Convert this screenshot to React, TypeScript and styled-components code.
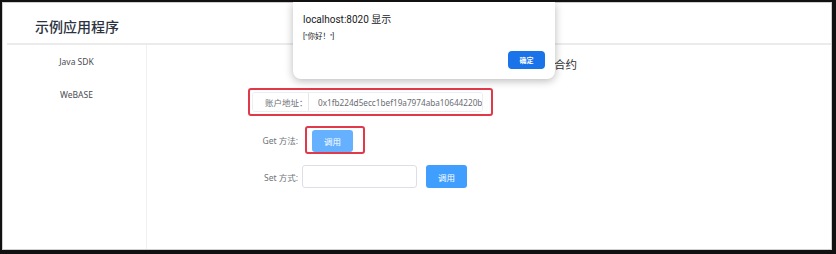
import { createGlobalStyle, styled } from 'styled-components';

const GlobalStyle = createGlobalStyle`
  html, body {
    margin: 0;
    padding: 0;
    background: #ffffff;
  }
  body {
    font-family: 'Noto Sans', 'Noto Sans CJK SC', sans-serif;
    color: #303133;
  }
  * {
    box-sizing: border-box;
  }
`;

const App = () => {
  const address = '0x1fb224d5ecc1bef19a7974aba10644220b';

  return (
    <>
      <GlobalStyle />
      <Frame>
        <Inner>
          <Header>
            <h1>示例应用程序</h1>
          </Header>
          <Body>
            <Sidebar>
              <MenuItem>Java SDK</MenuItem>
              <MenuItem>WeBASE</MenuItem>
            </Sidebar>
            <Main>
              <Title>合约</Title>
              <FormRow $top={15}>
                <Highlight $pad="2px 8px 2px 2px">
                  <InputGroup>
                    <Prepend>账户地址：</Prepend>
                    <GroupInput value={address} readOnly />
                  </InputGroup>
                </Highlight>
              </FormRow>
              <FormRow $top={10}>
                <Label>Get 方法:</Label>
                <Highlight $pad="2px 10px 0 5px" $shift={3}>
                  <Button $light>调用</Button>
                </Highlight>
              </FormRow>
              <FormRow $top={11}>
                <Label>Set 方式:</Label>
                <TextInput />
                <Button>调用</Button>
              </FormRow>
            </Main>
          </Body>
        </Inner>
        <Alert>
          <AlertTitle>localhost:8020 显示</AlertTitle>
          <AlertMessage>["你好！"]</AlertMessage>
          <AlertFooter>
            <AlertButton>确定</AlertButton>
          </AlertFooter>
        </Alert>
      </Frame>
    </>
  );
};

export default App;

const Frame = styled.div`
  position: relative;
  width: 836px;
  height: 254px;
  border-style: solid;
  border-color: #111111;
  border-width: 2px 4px 4px 2px;
  overflow: hidden;
`;

const Inner = styled.div`
  height: 100%;
  border: 1px solid #cfcfcf;
  padding-left: 4px;
  display: flex;
  flex-direction: column;
`;

const Header = styled.div`
  height: 42px;
  display: flex;
  align-items: center;
  padding: 5px 0 0 28px;
  border-bottom: 2px solid #ebebeb;
  h1 {
    margin: 0;
    font-size: 14px;
    font-weight: 500;
    color: #2c3340;
  }
`;

const Body = styled.div`
  flex: 1;
  display: flex;
`;

const Sidebar = styled.div`
  width: 140px;
  border-right: 1px solid #f0f0f0;
  display: flex;
  flex-direction: column;
`;

const MenuItem = styled.div`
  height: 33px;
  line-height: 33px;
  text-align: center;
  font-size: 8.5px;
  color: #4a4d52;
`;

const Main = styled.div`
  flex: 1;
  display: flex;
  flex-direction: column;
  padding-left: 101px;
`;

const Title = styled.div`
  width: 329px;
  margin-top: 12px;
  text-align: right;
  font-size: 11.5px;
  line-height: 16px;
  color: #303133;
`;

const FormRow = styled.div<{ $top: number }>`
  display: flex;
  align-items: center;
  margin-top: ${(p) => p.$top}px;
`;

const Highlight = styled.div<{ $pad: string; $shift?: number }>`
  display: flex;
  align-items: center;
  border: 2px solid #e03a4a;
  border-radius: 3px;
  padding: ${(p) => p.$pad};
  margin-left: ${(p) => p.$shift || 0}px;
`;

const InputGroup = styled.div`
  display: flex;
  height: 20px;
  width: 231px;
  border: 1px solid #eceef2;
  border-radius: 3px;
  overflow: hidden;
`;

const Prepend = styled.div`
  width: 56px;
  padding-left: 12px;
  display: flex;
  align-items: center;
  font-size: 8.5px;
  color: #707379;
  border-right: 1px solid #e4e7ed;
  background: #ffffff;
  white-space: nowrap;
`;

const GroupInput = styled.input`
  flex: 1;
  min-width: 0;
  border: none;
  outline: none;
  padding: 0 0 0 9px;
  font-family: 'Noto Sans', sans-serif;
  font-size: 8.2px;
  color: #6a6d73;
  background: #ffffff;
`;

const Label = styled.div`
  width: 50px;
  margin-right: 4px;
  text-align: right;
  font-size: 8.5px;
  color: #707379;
  white-space: nowrap;
`;

const TextInput = styled.input`
  width: 115px;
  height: 23px;
  border: 1px solid #dcdfe6;
  border-radius: 3px;
  outline: none;
  background: #ffffff;
`;

const Button = styled.button<{ $light?: boolean }>`
  width: 41px;
  height: ${(p) => (p.$light ? 22 : 23)}px;
  margin-left: ${(p) => (p.$light ? 0 : 9)}px;
  border: none;
  border-radius: 3px;
  background: ${(p) => (p.$light ? '#66b1ff' : '#409eff')};
  color: #ffffff;
  font-family: 'Noto Sans', 'Noto Sans CJK SC', sans-serif;
  font-size: 8.5px;
  padding: 0;
`;

const Alert = styled.div`
  position: absolute;
  top: 0;
  left: 291px;
  width: 262px;
  height: 77px;
  background: #ffffff;
  border-radius: 0 0 8px 8px;
  box-shadow: 0 2px 8px rgba(0, 0, 0, 0.28);
  padding: 11px 10px 10px 10px;
  display: flex;
  flex-direction: column;
`;

const AlertTitle = styled.div`
  font-family: Roboto, 'Noto Sans CJK SC', sans-serif;
  font-size: 10px;
  line-height: 14px;
  color: #202124;
`;

const AlertMessage = styled.div`
  margin-top: 4px;
  font-family: Roboto, 'Noto Sans CJK SC', sans-serif;
  font-size: 7.5px;
  line-height: 11px;
  color: #202124;
`;

const AlertFooter = styled.div`
  margin-top: auto;
  display: flex;
  justify-content: flex-end;
`;

const AlertButton = styled.button`
  width: 37px;
  height: 18px;
  border: none;
  border-radius: 4px;
  background: #1a73e8;
  color: #ffffff;
  font-family: Roboto, 'Noto Sans CJK SC', sans-serif;
  font-size: 7px;
  font-weight: 700;
  padding: 0;
`;
